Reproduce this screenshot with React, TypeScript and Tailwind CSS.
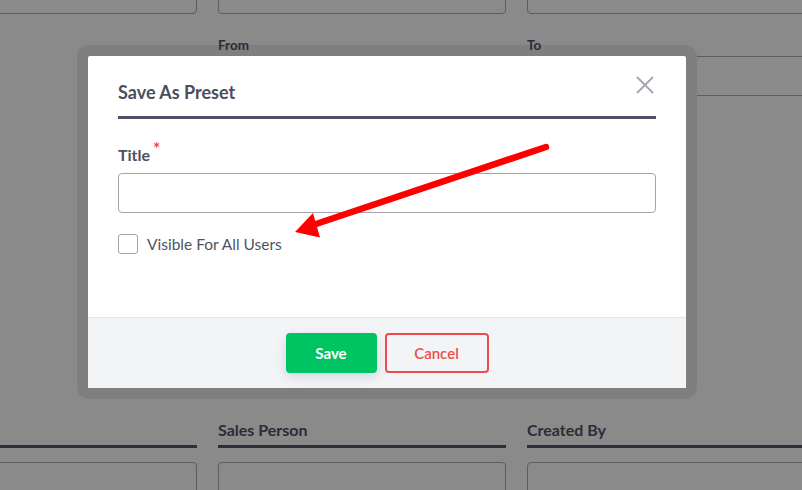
import { X } from "lucide-react";

function BgInput() {
  return <div className="h-10 rounded-[4px] border border-[#5c5c66]" />;
}

function BgHeader({ label }: { label: string }) {
  return (
    <div className="flex flex-col">
      <span className="h-5 whitespace-nowrap text-[16px] font-bold leading-5 text-[#2b2c36]">{label}</span>
      <div className="mt-[5px] h-[3px] bg-[#2e2f3b]" />
    </div>
  );
}

function BackgroundPage() {
  return (
    <div className="ml-[-91px] mt-[-26px] flex flex-col">
      <div className="grid grid-cols-[288px_288px_288px] gap-x-[21px]">
        <BgInput />
        <BgInput />
        <BgInput />
      </div>
      <div className="mt-[23px] grid grid-cols-[288px_288px_288px] gap-x-[21px]">
        <div />
        <div className="flex flex-col">
          <span className="relative z-10 h-4 text-[13.5px] font-bold leading-4 text-[#2b2c36]">From</span>
          <div className="mt-[3px]">
            <BgInput />
          </div>
        </div>
        <div className="flex flex-col">
          <span className="relative z-10 h-4 text-[13.5px] font-bold leading-4 text-[#2b2c36]">To</span>
          <div className="mt-[3px]">
            <BgInput />
          </div>
        </div>
      </div>
      <div className="mt-[324px] grid grid-cols-[288px_288px_288px] gap-x-[21px]">
        <div className="flex flex-col">
          <div className="h-5" />
          <div className="mt-[5px] h-[3px] bg-[#2e2f3b]" />
        </div>
        <BgHeader label="Sales Person" />
        <BgHeader label="Created By" />
      </div>
      <div className="mt-[14px] grid grid-cols-[288px_288px_288px] gap-x-[21px]">
        <BgInput />
        <BgInput />
        <BgInput />
      </div>
    </div>
  );
}

function PresetModal() {
  return (
    <div className="absolute left-[77px] top-[45px] w-[620px] rounded-[12px] bg-[#7f7f7f] p-[11px]">
      <div className="flex flex-col rounded-[2px] bg-white">
        <div className="relative flex h-[261px] flex-col px-[30px] pt-6">
          <span className="h-6 text-[18px] font-bold leading-6 text-[#4b4e5e]">Save As Preset</span>
          <X className="absolute right-[26px] top-[14px] size-[30px] text-[#a6a7af]" strokeWidth={1.5} />
          <div className="mt-3 h-[3px] bg-[#4e5163]" />
          <div className="mt-[26px] flex h-5 items-start">
            <span className="text-[16px] font-bold leading-5 text-[#4b4e5e]">Title</span>
            <span className="ml-[3px] mt-[-6px] text-[17px] font-bold leading-5 text-[#f0434a]">*</span>
          </div>
          <div className="mt-2 h-10 rounded-[4px] border border-[#a3a4ad]" />
          <div className="mt-[21px] flex items-center gap-[9px]">
            <div className="size-5 rounded-[3px] border border-[#a3a4ad]" />
            <span className="text-[15.5px] leading-5 text-[#50535f]">Visible For All Users</span>
          </div>
        </div>
        <div className="flex justify-center gap-2 border-t border-[#e3e6ea] bg-[#f3f4f6] pb-[15px] pt-[15px]">
          <button className="h-10 w-[91px] rounded-[4px] bg-[#00c462] text-[15px] font-bold text-white shadow-[0_4px_12px_rgba(60,80,140,0.18)]">
            Save
          </button>
          <button className="h-10 w-[104px] rounded-[4px] border-2 border-[#ef4b4d] text-[15px] font-semibold text-[#ef4b4d]">
            Cancel
          </button>
        </div>
      </div>
    </div>
  );
}

function RedArrow() {
  return (
    <svg className="absolute left-0 top-0" width="802" height="490" viewBox="0 0 802 490">
      <line x1="546" y1="147" x2="310" y2="226" stroke="#ff0000" strokeWidth="6.5" strokeLinecap="round" />
      <polygon points="295,232 313,213 320,237.5" fill="#ff0000" />
    </svg>
  );
}

export default function App() {
  return (
    <div
      className="relative h-[490px] w-[802px] overflow-hidden bg-[#8a8a8a]"
      style={{ fontFamily: "Lato, 'Open Sans', sans-serif" }}
    >
      <BackgroundPage />
      <PresetModal />
      <RedArrow />
    </div>
  );
}
